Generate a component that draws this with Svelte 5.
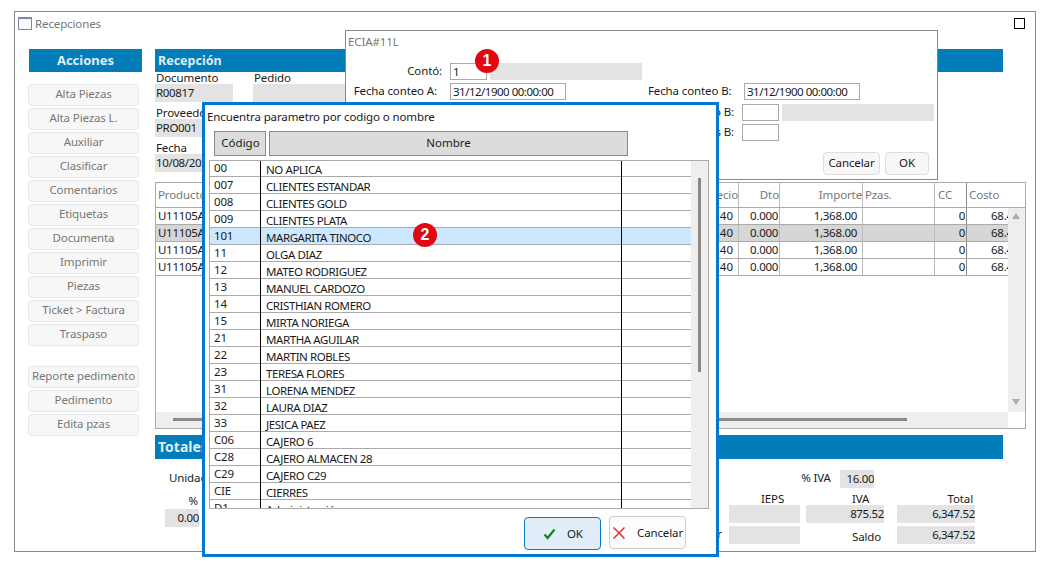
<script>
  const actions = ['Alta Piezas','Alta Piezas L.','Auxiliar','Clasificar','Comentarios','Etiquetas','Documenta','Imprimir','Piezas','Ticket > Factura','Traspaso'];
  const actions2 = ['Reporte pedimento','Pedimento','Edita pzas'];
  const gridRows = [false,true,false,false];
  const list = [['00','NO APLICA'],['007','CLIENTES ESTANDAR'],['008','CLIENTES GOLD'],['009','CLIENTES PLATA'],['101','MARGARITA TINOCO'],['11','OLGA DIAZ'],['12','MATEO RODRIGUEZ'],['13','MANUEL CARDOZO'],['14','CRISTHIAN ROMERO'],['15','MIRTA NORIEGA'],['21','MARTHA AGUILAR'],['22','MARTIN ROBLES'],['23','TERESA FLORES'],['31','LORENA MENDEZ'],['32','LAURA DIAZ'],['33','JESICA PAEZ'],['C06','CAJERO 6'],['C28','CAJERO ALMACEN 28'],['C29','CAJERO C29'],['CIE','CIERRES'],['D1','Administración']];
</script>

<div class="win">
  <div class="titlebar">
    <span class="winicon"></span>
    <span class="wintitle">Recepciones</span>
    <span class="maxbox"></span>
  </div>
  <div class="body">
    <aside class="side">
      <div class="sidehead">Acciones</div>
      <div class="btns">
        {#each actions as a}<div class="act">{a}</div>{/each}
      </div>
      <div class="btns second">
        {#each actions2 as a}<div class="act">{a}</div>{/each}
      </div>
    </aside>
    <main class="content">
      <div class="bar">Recepción</div>
      <div class="fields">
        <div class="lab">Documento</div><div class="lab">Pedido</div>
        <div class="val">R00817</div><div class="val"></div>
        <div class="lab l2">Proveedor</div><div></div>
        <div class="val">PRO001</div><div></div>
        <div class="lab l2">Fecha</div><div></div>
        <div class="val">10/08/2020</div><div></div>
      </div>
      <div class="table">
        <div class="trow thead">
          <div class="c c1">Producto</div><div class="c c2 r">Precio</div><div class="c c3 r">Dto</div><div class="c c4 r">Importe</div><div class="c c5">Pzas.</div><div class="c c6">CC</div><div class="c c7">Costo</div>
        </div>
        {#each gridRows as sel}
          <div class="trow tbody" class:sel>
            <div class="c c1">U11105A</div><div class="c c2 r pr">68.40</div><div class="c c3 r">0.000</div><div class="c c4 r pr">1,368.00</div><div class="c c5"></div><div class="c c6 r">0</div><div class="c c7 r pr">68.40</div>
          </div>
        {/each}
        <div class="vscroll"><span class="up"></span><span class="down"></span></div>
        <div class="hscroll"><span class="hthumb"></span></div>
      </div>
      <div class="bar totales">Totales</div>
      <div class="tot-top">
        <span>Unidades</span>
        <span class="ivalab">% IVA</span>
        <span class="val ivaval">16.00</span>
      </div>
      <div class="tot-grid">
        <div class="pct">%</div>
        <div class="tl ieps">IEPS</div>
        <div class="tl iva">IVA</div>
        <div class="tl total">Total</div>
        <div class="val zero">0.00</div>
        <div class="val blank b1"></div>
        <div class="val amt a1">875.52</div>
        <div class="val amt a2">6,347.52</div>
        <div class="porp">Por pagar</div>
        <div class="val blank b2"></div>
        <div class="saldo">Saldo</div>
        <div class="val amt a3">6,347.52</div>
      </div>
    </main>
  </div>
</div>

<section class="ecia">
  <div class="ecia-title">ECIA#11L</div>
  <div class="erow r1">
    <span class="elab">Contó:</span><span class="inp short">1</span><span class="val egray"></span>
  </div>
  <div class="erow r2">
    <span class="elab">Fecha conteo A:</span><span class="inp long">31/12/1900 00:00:00</span>
    <span class="elab2">Fecha conteo B:</span><span class="inp long">31/12/1900 00:00:00</span>
  </div>
  <div class="erow r3">
    <span class="elab3">Contó B:</span><span class="inp short">&nbsp;</span><span class="val egray"></span>
  </div>
  <div class="erow r4">
    <span class="elab3">Piezas B:</span><span class="inp short">&nbsp;</span>
  </div>
  <div class="ebtns">
    <div class="ebtn cancel">Cancelar</div><div class="ebtn okb">OK</div>
  </div>
</section>

<section class="modal">
  <div class="mtitle">Encuentra parametro por codigo o nombre</div>
  <div class="mheads">
    <div class="mh cod">Código</div><div class="mh nom">Nombre</div>
  </div>
  <div class="mlist">
    <div class="lrows">
      {#each list as [c, n], i}
        <div class="lrow" class:hl={i === 4}>
          <span class="lc">{c}</span><span class="ln">{n}</span><span class="lx"></span>
        </div>
      {/each}
    </div>
    <div class="lscroll"><span class="lthumb"></span></div>
  </div>
  <div class="mbtns">
    <div class="mbtn ok">
      <svg width="13" height="12" viewBox="0 0 13 12"><path d="M1.5 6.5 L4.6 10 L11.5 1.5" fill="none" stroke="#0a8a12" stroke-width="2.2"/></svg>
      <span>OK</span>
    </div>
    <div class="mbtn can">
      <svg width="12" height="12" viewBox="0 0 12 12"><path d="M.5 .5 L11.5 11.5 M11.5 .5 L.5 11.5" fill="none" stroke="#d8352a" stroke-width="1.5"/></svg>
      <span>Cancelar</span>
    </div>
  </div>
</section>

<div class="badge b-1">1</div>
<div class="badge b-2">2</div>

<style>
  :global(body) { margin: 0; background: #fff; }
  :global(#app) { font-family: "Noto Sans", "Open Sans", sans-serif; font-size: 11.5px; color: #1a1a1a; letter-spacing: -0.12px; }
  * { box-sizing: border-box; }

  .win { position: absolute; left: 14px; top: 11px; width: 1022px; height: 541px; border: 1px solid #888; background: #fff; overflow: hidden; }
  .titlebar { height: 37px; display: flex; align-items: flex-start; padding: 5px 10px 0 3px; }
  .winicon { width: 14px; height: 13px; border: 1px solid #7b86b5; border-top-width: 2px; background: #f8f8fb; }
  .wintitle { margin-left: 3px; color: #777; line-height: 14px; }
  .maxbox { margin-left: auto; width: 11px; height: 11px; border: 1px solid #000; margin-top: 1px; }
  .body { display: flex; padding-left: 13px; }
  .side { width: 127px; flex: none; }
  .sidehead { margin-left: 1px; width: 113px; height: 23px; background: #037cba; color: #dfeef7; font-weight: 700; font-size: 13px; text-align: center; line-height: 23px; letter-spacing: 0; }
  .btns { margin-top: 12px; display: flex; flex-direction: column; gap: 2px; width: 111px; }
  .second { margin-top: 20px; }
  .act { height: 22px; background: #f7f7f7; border: 1px solid #e8e8e8; border-radius: 4px; color: #777; text-align: center; line-height: 17px; white-space: nowrap; }

  .content { width: 871px; flex: none; }
  .bar { width: 848px; height: 23px; background: #037cba; color: #dfeef7; font-weight: 700; font-size: 12.5px; line-height: 23px; padding-left: 3px; letter-spacing: 0; }
  .fields { display: grid; grid-template-columns: 78px 92px; column-gap: 20px; grid-template-rows: 12px 18px 17px 18px 17px 18px; height: 110px; }
  .lab { padding-left: 1px; line-height: 12px; white-space: nowrap; }
  .l2 { line-height: 21px; }
  .val { background: #e3e3e3; line-height: 18px; white-space: nowrap; overflow: hidden; padding-left: 1px; letter-spacing: -0.35px; }

  .table { position: relative; height: 247px; border: 1px solid #aaa; overflow: hidden; }
  .trow { display: grid; grid-template-columns: 525px 58px 41px 83px 72px 32px 59px; height: 17px; border-bottom: 1px solid #aaa; }
  .thead { height: 25px; border-bottom: 1px solid #aaa; color: #777; line-height: 24px; }
  .tbody { line-height: 16px; letter-spacing: -0.3px; }
  .sel { background: #d6d6d6; }
  .c { border-right: 1px solid #bbb; padding: 0 1px 0 2px; white-space: nowrap; overflow: hidden; }
  .thead .r { padding-right: 0; }
  .c6 { border-right-color: #888; }
  .c7 { border-right: 0; }
  .thead .c6 { padding-left: 3px; }
  .r { text-align: right; }
  .pr { padding-right: 5px; }
  .tbody .c2 { padding-right: 5px; letter-spacing: 0; }
  .tbody .c7 { padding-right: 7px; }
  .vscroll { position: absolute; right: 0; top: 25px; width: 17px; bottom: 16px; background: #eee; }
  .up, .down { position: absolute; left: 4px; width: 0; height: 0; border-left: 4px solid transparent; border-right: 4px solid transparent; }
  .up { top: 5px; border-bottom: 6px solid #aaa; }
  .down { bottom: 7px; border-top: 6px solid #aaa; }
  .hscroll { position: absolute; left: 0; right: 17px; bottom: 0; height: 16px; background: #eee; }
  .hthumb { position: absolute; left: 17px; width: 734px; top: 6px; height: 3px; background: #888; }

  .totales { margin-top: 6px; height: 24px; font-size: 14px; line-height: 24px; }
  .tot-top { display: flex; height: 18px; margin-top: 11px; padding-left: 14px; line-height: 16px; }
  .ivalab { margin-left: 582px; width: 40px; flex: none; }
  .ivaval { width: 34px; flex: none; padding-left: 0; text-align: right; margin-left: -1px; }
  .tot-grid { display: grid; grid-template-columns: 10px 34px 530px 71px 6px 78px 13px 78px; grid-template-rows: 17px 18px 3px 18px; }
  .pct { grid-column: 2; grid-row: 1; text-align: right; padding-right: 1px; line-height: 26px; }
  .tl { grid-row: 1; line-height: 16px; margin-top: 3px; }
  .ieps { grid-column: 4; padding-left: 32px; }
  .iva { grid-column: 6; padding-left: 46px; }
  .total { grid-column: 8; text-align: right; padding-right: 2px; }
  .zero { grid-column: 2; grid-row: 2; margin-top: 4px; margin-bottom: -4px; text-align: right; }
  .b1 { grid-column: 4; grid-row: 2; }
  .a1 { grid-column: 6; grid-row: 2; }
  .a2 { grid-column: 8; grid-row: 2; }
  .amt { text-align: right; }
  .porp { grid-column: 3; grid-row: 4; text-align: right; padding-right: 7px; }
  .b2 { grid-column: 4; grid-row: 4; }
  .saldo { grid-column: 6; grid-row: 4; padding-left: 46px; line-height: 22px; }
  .a3 { grid-column: 8; grid-row: 4; }

  .ecia { position: absolute; left: 345px; top: 30px; width: 593px; height: 150px; background: #fff; border: 1px solid #888; }
  .ecia-title { color: #777; padding: 4px 0 0 2px; height: 32px; line-height: 14px; }
  .erow { display: flex; align-items: center; height: 17px; }
  .r2 { margin-top: 3px; }
  .r3 { margin-top: 4px; padding-left: 296px; }
  .r4 { margin-top: 3px; padding-left: 296px; }
  .elab { width: 96px; flex: none; text-align: right; margin-right: 8px; white-space: nowrap; padding-bottom: 2px; }
  .r2 .elab { padding-right: 5px; }
  .elab2 { margin-left: 82px; width: 96px; flex: none; white-space: nowrap; padding-bottom: 2px; }
  .elab3 { width: 92px; flex: none; text-align: right; margin-right: 8px; white-space: nowrap; padding-bottom: 2px; }
  .inp { display: block; height: 17px; border: 1px solid #aaa; line-height: 16px; padding-left: 2px; background: #fff; white-space: nowrap; letter-spacing: -0.5px; }
  .short { width: 37px; flex: none; }
  .long { width: 116px; flex: none; }
  .egray { display: block; width: 152px; height: 17px; margin-left: 3px; }
  .ebtns { display: flex; gap: 5px; margin: 11px 0 0 477px; }
  .ebtn { height: 23px; background: #f7f7f7; border: 1px solid #ddd; border-radius: 4px; text-align: center; line-height: 20px; }
  .cancel { width: 57px; }
  .okb { width: 44px; }

  .modal { position: absolute; left: 202px; top: 102px; width: 517px; height: 455px; background: #fff; border: 3px solid #0078d4; }
  .mtitle { height: 26px; padding: 4px 0 0 2px; line-height: 15px; white-space: nowrap; }
  .mheads { display: flex; gap: 3px; margin-left: 9px; }
  .mh { height: 25px; background: #dcdcdc; border: 1px solid #888; text-align: center; line-height: 22px; letter-spacing: 0; }
  .cod { width: 52px; padding-left: 1px; }
  .nom { width: 359px; }
  .mlist { position: relative; margin: 4px 0 0 4px; width: 500px; height: 349px; border: 1px solid #aaa; overflow: hidden; }
  .lrows { width: 482px; margin-top: -1px; }
  .lrow { display: grid; grid-template-columns: 51px 361px 70px; height: 17px; border-bottom: 1px solid #aaa; line-height: 16px; }
  .hl { background: #cce8ff; }
  .lc { padding-left: 4px; border-right: 1px solid #000; margin-bottom: -1px; letter-spacing: -0.2px; }
  .ln { padding-left: 5px; border-right: 1px solid #000; margin-bottom: -1px; line-height: 20px; letter-spacing: -0.42px; }
  .lscroll { position: absolute; right: 0; top: 0; bottom: 0; width: 17px; background: #eee; }
  .lthumb { position: absolute; left: 7px; top: 17px; width: 3px; height: 194px; background: #888; }
  .mbtns { display: flex; gap: 8px; margin: 7px 0 0 319px; align-items: flex-start; }
  .mbtn { width: 77px; height: 33px; border-radius: 4px; display: flex; align-items: center; white-space: nowrap; }
  .ok { background: #e1eef9; border: 1px solid #0a78c8; margin-top: 1px; padding-left: 18px; gap: 11px; }
  .can { background: #fdfdfd; border: 1px solid #ccc; padding-left: 3px; gap: 12px; }

  .badge { position: absolute; width: 24px; height: 24px; border-radius: 50%; background: #e30613; color: #fff; font-weight: 700; font-size: 16px; font-family: "Liberation Sans", sans-serif; text-align: center; line-height: 24px; letter-spacing: 0; }
  .b-1 { left: 475px; top: 49px; }
  .b-2 { left: 413px; top: 223px; }
</style>
